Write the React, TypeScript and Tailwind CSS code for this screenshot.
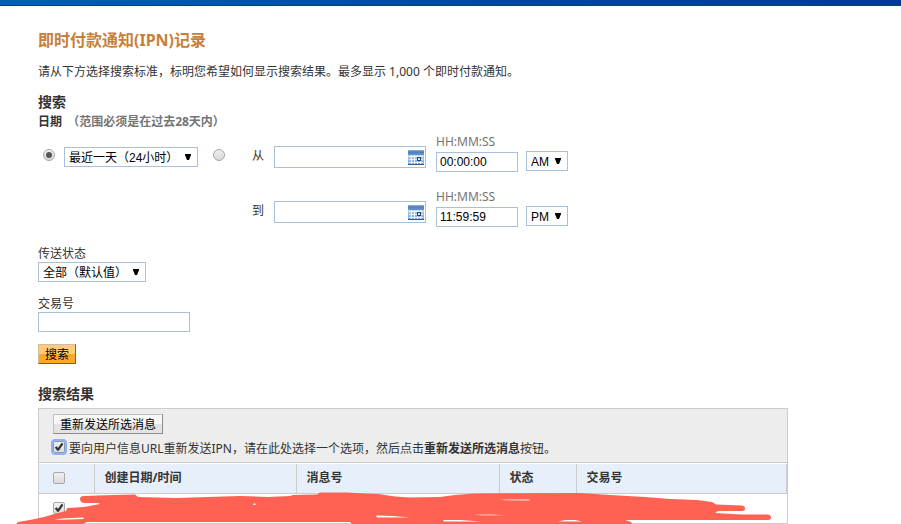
import React from "react";

const field = "block rounded-none border border-[#a9c0d9] bg-white px-[3px] text-black outline-none";

function CheckBox({ label, id, checked, focused }: { label?: string; id?: string; checked?: boolean; focused?: boolean }) {
  return (
    <span className="grid size-3 shrink-0">
      <input
        type="checkbox"
        id={id}
        aria-label={label}
        defaultChecked={checked}
        className={
          "peer col-start-1 row-start-1 size-3 appearance-none rounded-[2px] border bg-linear-to-b from-[#f0f0f0] to-[#dcdcdc] " +
          (focused ? "border-[#8a9bb8] ring-2 ring-[#8fb2ee]" : "border-[#a8a8a8]")
        }
      />
      <svg viewBox="0 0 12 12" className="pointer-events-none invisible col-start-1 row-start-1 size-3 peer-checked:visible" aria-hidden="true">
        <path d="M1.8 6.4 L3.8 5.2 L5 7 L8.6 1.8 L10.4 3 L5.8 9.8 L4.2 9.8 Z" fill="#333" />
      </svg>
    </span>
  );
}

function Radio({ label, checked }: { label: string; checked?: boolean }) {
  return (
    <span className="grid size-3 shrink-0">
      <input
        type="radio"
        name="range"
        aria-label={label}
        defaultChecked={checked}
        className="peer col-start-1 row-start-1 size-3 appearance-none rounded-full border border-[#a6a6a6] bg-linear-to-b from-[#f0f0f0] to-[#d9d9d9]"
      />
      <span className="pointer-events-none invisible col-start-1 row-start-1 size-1.5 place-self-center rounded-full bg-[#555] peer-checked:visible" />
    </span>
  );
}

function Select({ id, label, options, value, width }: { id?: string; label?: string; options: string[]; value: string; width: string }) {
  return (
    <span className={"grid h-5 shrink-0 " + width}>
      <select
        id={id}
        aria-label={label}
        defaultValue={value}
        className="col-start-1 row-start-1 h-5 w-full appearance-none rounded-none border border-[#a9c0d9] bg-white pt-px pl-1 font-['Liberation_Sans','Noto_Sans_CJK_SC',sans-serif] text-xs text-black"
      >
        {options.map((o) => (
          <option key={o}>{o}</option>
        ))}
      </select>
      <svg viewBox="0 0 6 6" className="pointer-events-none col-start-1 row-start-1 mr-[7px] size-1.5 self-center justify-self-end" aria-hidden="true">
        <path d="M0 0 H6 V1 L4 6 H2 L0 1 Z" fill="#000" />
      </svg>
    </span>
  );
}

function CalendarIcon() {
  return (
    <svg viewBox="0 0 16 15" className="h-[15px] w-4" aria-hidden="true">
      <defs>
        <linearGradient id="calHead" x1="0" y1="0" x2="0" y2="1">
          <stop offset="0" stopColor="#8fb3dc" />
          <stop offset="0.4" stopColor="#4a7fbc" />
          <stop offset="1" stopColor="#6a98cc" />
        </linearGradient>
        <linearGradient id="calBody" x1="0" y1="0" x2="0" y2="1">
          <stop offset="0" stopColor="#dce9f8" />
          <stop offset="1" stopColor="#7ba3d0" />
        </linearGradient>
      </defs>
      <rect width="16" height="15" rx="1" fill="url(#calBody)" />
      <rect width="16" height="5" rx="1" fill="url(#calHead)" />
      <rect x="0" y="14" width="16" height="1" fill="#2d5f97" />
      <path d="M1 6.5H15M1 9.5H15M1 12.5H15M3.5 5V14M6.5 5V14M9.5 5V14M12.5 5V14" stroke="#fff" strokeOpacity=".75" />
      <rect x="9.5" y="7.5" width="3" height="3" fill="#dcecff" stroke="#1f4470" />
    </svg>
  );
}

function TimeRow({ label, id, time, half }: { label: string; id: string; time: string; half: string }) {
  return (
    <div className="flex items-start">
      <label htmlFor={id} className="mt-[14px] w-[22px]">
        {label}
      </label>
      <div className="mt-3 mr-[10px] flex h-[22px] w-[152px] items-center border border-[#a9c0d9] bg-white pr-px">
        <input id={id} type="text" className="h-5 min-w-0 flex-1 px-1 outline-none" />
        <button type="button" aria-label="日历">
          <CalendarIcon />
        </button>
      </div>
      <div className="mr-2 w-[82px]">
        <label htmlFor={id + "-time"} className="block text-[#757575]">
          HH:MM:SS
        </label>
        <input
          id={id + "-time"}
          type="text"
          defaultValue={time}
          className={field + " mt-0.5 h-5 w-full font-['Liberation_Sans',sans-serif]"}
        />
      </div>
      <div className="pt-[17px]">
        <Select label={label} options={["AM", "PM"]} value={half} width="w-[42px]" />
      </div>
    </div>
  );
}

function Marker() {
  return (
    <svg viewBox="16 490 756 34" className="pointer-events-none absolute bottom-0 -left-[23px] h-[34px] w-[756px]" aria-hidden="true">
      <path
        fill="#ff6152"
        d="M16 524 L18 522 L30 520 L44 517 L54 514 L66 511 L67 508 L84 507 L100 504 L98 503 L84 503 Q80 502 80 499 Q80 496 84 496 L113 495 L135 494.5 L138 497 L176 498 L240 496 L268 497 L290 496 L293 495 L317 494.5 L320 492.5 L347 492.5 L365 493.5 L378 494 L395 496.5 L410 497.5 L440 497 L455 495 L475 493.5 L580 493 L610 495 L645 497 L670 499 L697 500 L712 502 L716 504.5 L742 505.5 Q745 506 745 508.5 Q745 511 742 511 L718 511 L715 513 L742 514.5 L768 514.5 Q771 515 771 517.5 Q771 520 768 520 L625 520 L631 522 L632 524 L352 524 L350 522 L87 522 L83 524 Z"
      />
      <path d="M54 520 L62 518.5 L83 517.5 L84 519 L70 519.5 Z M376 515.5 L392 516 L410 517.5 L377 517.5 Z M443 520 L460 520 L482 521.5 L444 521.5 Z M558 521.5 L565 520 L575 520 L582 521.5 Z M253 505 L254.5 503 L256 505 Z" fill="#fff" />
      <path d="M500 499 L530 499 L529 501 L506 500.5 Z M474 514.5 L490 514 L505 515.5 L480 515.5 Z" fill="#ffaca3" />
    </svg>
  );
}

const th = "border-l border-[#ccc] px-[10px] text-left font-bold";

export default function App() {
  return (
    <div className="bg-white font-['Noto_Sans','Noto_Sans_CJK_SC',sans-serif] text-xs leading-4 text-[#333]" lang="zh-CN">
      <header className="h-1.5 border-b border-[#004089] bg-linear-to-r from-[#0061af] via-[#004b9c] to-[#003b90]" />
      <main className="overflow-hidden px-[38px] pt-[22px]">
        <h1 className="text-base leading-6 font-bold text-[#c88039]">即时付款通知(IPN)记录</h1>
        <p className="mt-3">请从下方选择搜索标准，标明您希望如何显示搜索结果。最多显示 1,000 个即时付款通知。</p>

        <form onSubmit={(e) => e.preventDefault()}>
          <h2 className="mt-3 text-sm leading-5 font-bold">搜索</h2>
          <p className="mt-0.5 font-bold">
            日期 <span className="ml-0.5 text-[#757575]">（范围必须是在过去28天内）</span>
          </p>

          <div className="mt-1 flex items-start">
            <div className="flex items-center pt-[13px] pl-[5px]">
              <div className="mr-[9px] -mt-1">
                <Radio label="最近" checked />
              </div>
              <Select label="时间范围" options={["最近一天（24小时）"]} value="最近一天（24小时）" width="w-[134px]" />
              <div className="-mt-1 mr-[27px] ml-[15px]">
                <Radio label="自定义范围" />
              </div>
            </div>
            <div className="flex flex-col gap-[17px]">
              <TimeRow label="从" id="from" time="00:00:00" half="AM" />
              <TimeRow label="到" id="to" time="11:59:59" half="PM" />
            </div>
          </div>

          <label htmlFor="status" className="mt-[19px] block">
            传送状态
          </label>
          <Select id="status" options={["全部（默认值）"]} value="全部（默认值）" width="w-[108px]" />

          <label htmlFor="txn" className="mt-[14px] block">
            交易号
          </label>
          <input id="txn" type="text" className={field + " h-5 w-[152px]"} />

          <button
            type="submit"
            className="mt-3 block h-5 border border-t-[#d5bd98] border-r-[#915e0d] border-b-[#915e0d] border-l-[#d5bd98] bg-linear-to-b from-[#ffcb7c] from-50% to-[#ffa822] to-50% px-1.5 pt-px leading-[18px] text-black"
          >
            搜索
          </button>
        </form>

        <section>
          <h2 className="mt-5 text-sm leading-5 font-bold">搜索结果</h2>
          <div className="relative mt-1 w-full max-w-[750px] border border-b-0 border-[#ccc]">
            <div className="border-b border-[#ccc] bg-[#ededed] py-[5px] pl-[14px]">
              <button
                type="button"
                className="block h-5 border border-t-[#bfbfbf] border-r-[#8c8c8c] border-b-[#8c8c8c] border-l-[#bfbfbf] bg-linear-to-b from-[#f8f8f8] from-50% to-[#e3e3e3] to-50% px-1.5 pt-px leading-[18px] text-black"
              >
                重新发送所选消息
              </button>
              <div className="mt-[7px] flex gap-1">
                <CheckBox id="resend" checked focused />
                <label htmlFor="resend">
                  要向用户信息URL重新发送IPN，请在此处选择一个选项，然后点击<b>重新发送所选消息</b>按钮。
                </label>
              </div>
            </div>
            <table className="mt-px w-full table-fixed border-collapse">
              <colgroup>
                <col className="w-[55px]" />
                <col className="w-[202px]" />
                <col className="w-[203px]" />
                <col className="w-[77px]" />
                <col />
              </colgroup>
              <thead>
                <tr className="h-[29px] border-b border-[#ccc] bg-[#e7effa]">
                  <th className="pl-[14px]">
                    <CheckBox label="全选" />
                  </th>
                  <th className={th}>创建日期/时间</th>
                  <th className={th}>消息号</th>
                  <th className={th}>状态</th>
                  <th className={th + " border-r"}>交易号</th>
                </tr>
              </thead>
              <tbody>
                <tr className="h-[30px] border-b border-[#ccc]">
                  <td className="pl-[14px]">
                    <CheckBox label="选择" checked />
                  </td>
                  <td />
                  <td />
                  <td />
                  <td />
                </tr>
              </tbody>
            </table>
            <Marker />
          </div>
        </section>
      </main>
    </div>
  );
}
